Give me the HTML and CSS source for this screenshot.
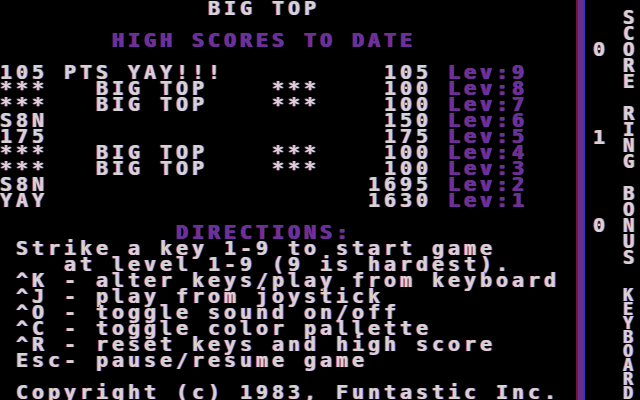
FILE: index.html
```html
<!DOCTYPE html>
<html>
<head>
<meta charset="utf-8">
<link rel="stylesheet" href="styles.css">
</head>
<body>
<div class="screen">
  <div class="main">
    <div class="row">             BIG TOP</div>
    <div class="row"></div>
    <div class="row purple">       HIGH SCORES TO DATE</div>
    <div class="row"></div>
    <div class="row">105 PTS YAY!!!          105 <span class="purple">Lev:9</span></div>
    <div class="row">***   BIG TOP    ***    100 <span class="purple">Lev:8</span></div>
    <div class="row">***   BIG TOP    ***    100 <span class="purple">Lev:7</span></div>
    <div class="row">S8N                     150 <span class="purple">Lev:6</span></div>
    <div class="row">175                     175 <span class="purple">Lev:5</span></div>
    <div class="row">***   BIG TOP    ***    100 <span class="purple">Lev:4</span></div>
    <div class="row">***   BIG TOP    ***    100 <span class="purple">Lev:3</span></div>
    <div class="row">S8N                    1695 <span class="purple">Lev:2</span></div>
    <div class="row">YAY                    1630 <span class="purple">Lev:1</span></div>
    <div class="row"></div>
    <div class="row purple">           DIRECTIONS:</div>
    <div class="row"> Strike a key 1-9 to start game</div>
    <div class="row">    at level 1-9 (9 is hardest).</div>
    <div class="row"> ^K - alter keys/play from keyboard</div>
    <div class="row"> ^J - play from joystick</div>
    <div class="row"> ^O - toggle sound on/off</div>
    <div class="row"> ^C - toggle color pallette</div>
    <div class="row"> ^R - reset keys and high score</div>
    <div class="row"> Esc- pause/resume game</div>
    <div class="row"></div>
    <div class="row"> Copyright (c) 1983, Funtastic Inc.</div>
  </div>
  <div class="bar"></div>
  <div class="nums">
    <div class="num">0</div>
    <div class="num">1</div>
    <div class="num">0</div>
  </div>
  <div class="labels">
    <div class="label"><span>S</span><span>C</span><span>O</span><span>R</span><span>E</span></div>
    <div class="label"><span>R</span><span>I</span><span>N</span><span>G</span></div>
    <div class="label"><span>B</span><span>O</span><span>N</span><span>U</span><span>S</span></div>
    <div class="label kb"><span>K</span><span>E</span><span>Y</span><span>B</span><span>O</span><span>A</span><span>R</span><span>D</span></div>
  </div>
</div>
</body>
</html>
```
FILE: styles.css
```css
html, body {
  margin: 0;
  padding: 0;
  background: #000;
}
.screen {
  display: flex;
  width: 640px;
  height: 400px;
  overflow: hidden;
  background: #000;
  font-family: "DejaVu Sans Mono", monospace;
  font-weight: bold;
  font-size: 20px;
  letter-spacing: 3.96px;
  color: #d4d4d4;
  text-shadow: -1px 0 #c8401c, 1px 0 #2a6cf0;
}
.main {
  width: 576px;
  flex: none;
  display: flex;
  flex-direction: column;
}
.row {
  height: 16px;
  line-height: 16px;
  white-space: pre;
}
.purple {
  color: #6c309a;
  text-shadow: -1px 0 #7a1a2a, 1px 0 #2e3cb8;
}
.bar {
  width: 9px;
  flex: none;
  box-sizing: border-box;
  background: #6c2c8e;
  border-left: 2px solid #6e1c34;
  border-right: 2px solid #2c3cc0;
}
.nums {
  width: 30px;
  flex: none;
  padding-left: 8px;
  padding-top: 41px;
  display: flex;
  flex-direction: column;
  gap: 72px;
}
.num {
  height: 16px;
  line-height: 16px;
}
.labels {
  flex: none;
  width: 17px;
  padding-top: 9px;
  display: flex;
  flex-direction: column;
  gap: 16px;
  font-size: 19px;
}
.label span {
  display: block;
  height: 16px;
  line-height: 16px;
}
.label.kb {
  margin-top: 7px;
  font-size: 17px;
}
.label.kb span {
  height: 14px;
  line-height: 14px;
}
```
